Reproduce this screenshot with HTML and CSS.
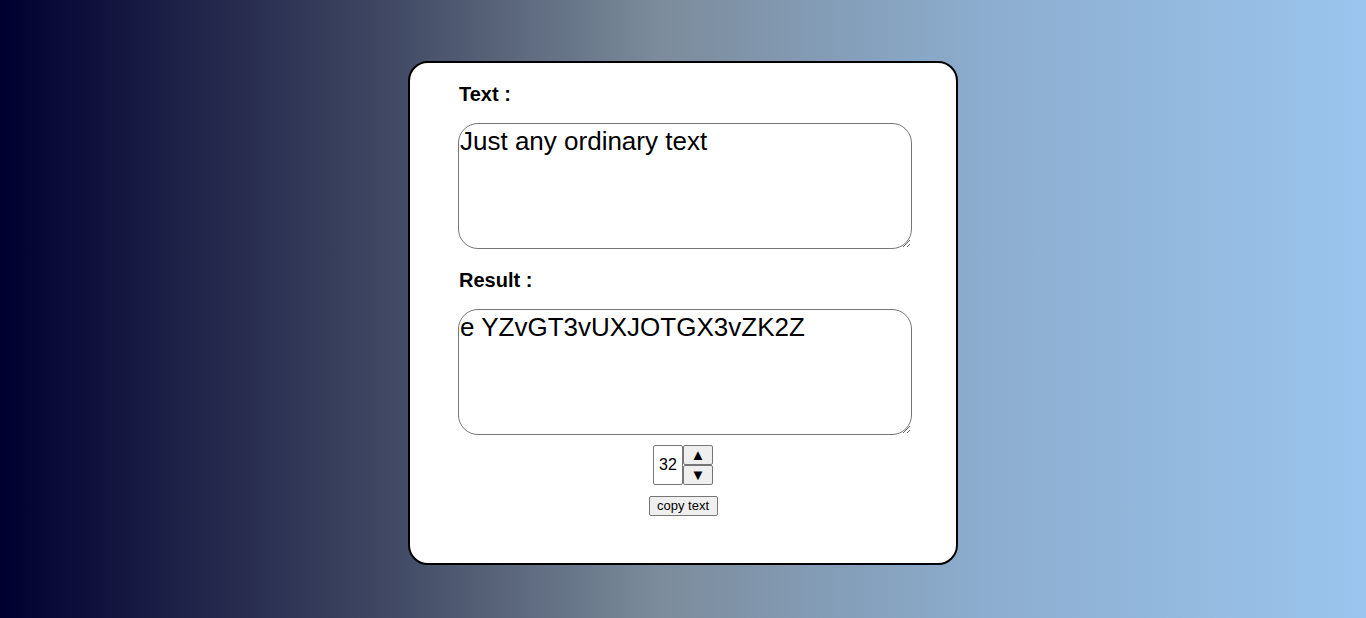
FILE: index.html
```html
<!DOCTYPE html>
<html lang="en">
<head>
<meta charset="utf-8">
<title>Text converter</title>
<link rel="stylesheet" href="styles.css">
</head>
<body>
<main class="card">
  <label class="label label-text" for="src">Text :</label>
  <textarea id="src" class="box box-src">Just any ordinary text</textarea>
  <label class="label label-result" for="res">Result :</label>
  <textarea id="res" class="box" spellcheck="false">e YZvGT3vUXJOTGX3vZK2Z</textarea>
  <div class="stepper">
    <input class="num" type="text" value="32" aria-label="length">
    <div class="arrows">
      <button class="arrow" type="button">&#9650;</button>
      <button class="arrow" type="button">&#9660;</button>
    </div>
  </div>
  <button class="copy" type="button">copy text</button>
</main>
</body>
</html>
```
FILE: styles.css
```css
html, body {
  margin: 0;
  height: 100%;
}
body {
  background: linear-gradient(to right, #000030 0%, #3f4762 28%, #7b8b9b 48%, #8cadcf 72%, #9bc5ee 100%);
  font-family: "Liberation Sans", Arial, sans-serif;
  padding-top: 61px;
  box-sizing: border-box;
}
.card {
  width: 550px;
  height: 504px;
  margin: 0 auto;
  box-sizing: border-box;
  background: #fff;
  border: 2px solid #000;
  border-radius: 20px;
  padding: 20px 44px 0 48px;
  display: flex;
  flex-direction: column;
}
.label {
  font-size: 20px;
  font-weight: bold;
  line-height: 23px;
  color: #000;
  padding-left: 1px;
}
.label-text { margin-bottom: 17px; }
.label-result { margin-top: 20px; margin-bottom: 17px; }
.box {
  width: 454px;
  height: 126px;
  box-sizing: border-box;
  border: 1px solid #767676;
  border-radius: 20px;
  padding: 2px 0 0 1px;
  font-family: "Liberation Sans", Arial, sans-serif;
  font-size: 26px;
  color: #000;
  margin: 0;
  outline: none;
}
.stepper {
  display: flex;
  justify-content: center;
  margin-top: 10px;
  margin-left: -48px;
  margin-right: -44px;
}
.num {
  width: 30px;
  height: 40px;
  box-sizing: border-box;
  border: 1px solid #767676;
  border-radius: 2px;
  padding: 0;
  text-align: center;
  font-family: "Liberation Sans", Arial, sans-serif;
  font-size: 16px;
  color: #000;
  margin: 0;
}
.arrows {
  display: flex;
  flex-direction: column;
}
.arrow {
  width: 30px;
  height: 20px;
  box-sizing: border-box;
  background: #efefef;
  border: 1px solid #767676;
  border-radius: 2px;
  padding: 0;
  margin: 0;
  font-size: 15px;
  line-height: 18px;
  color: #000;
}
.copy {
  align-self: center;
  margin-top: 11px;
  margin-left: -48px;
  margin-right: -44px;
  height: 20px;
  width: 69px;
  padding: 0 0 1px;
  box-sizing: border-box;
  background: #efefef;
  border: 1px solid #767676;
  border-radius: 2px;
  font-family: "Liberation Sans", Arial, sans-serif;
  font-size: 13px;
  color: #000;
}
```
